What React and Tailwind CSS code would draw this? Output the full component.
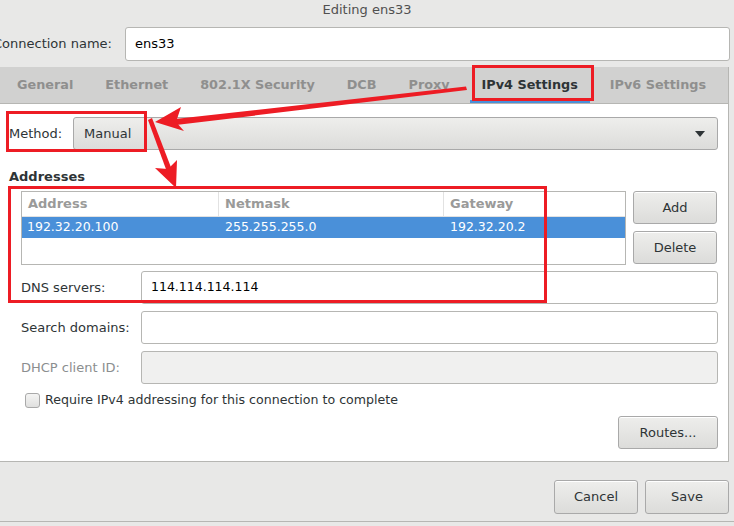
import React from 'react';

const tabs = ['General', 'Ethernet', '802.1X Security', 'DCB', 'Proxy', 'IPv4 Settings', 'IPv6 Settings'];

const Button = ({ children, className = '' }) => (
  <div
    className={`flex items-center justify-center rounded-[3px] border border-[#a9a9a9] bg-gradient-to-b from-[#eeeeec] to-[#dcdcda] text-[#2e3436] shadow-[inset_0_1px_0_#fff] ${className}`}
  >
    {children}
  </div>
);

const Field = ({ label, value, disabled }) => (
  <div className="flex items-center h-[33px]">
    <div className={`w-[120px] ${disabled ? 'text-[#8b8e8f]' : 'text-[#2e3436]'}`}>{label}</div>
    <div
      className={`flex-1 h-full rounded-[3px] border border-[#b6b6b3] flex items-center px-[9px] ${
        disabled ? 'bg-[#f0f0ef]' : 'bg-white'
      }`}
    >
      <span className="text-black text-[12.5px]">{value}</span>
    </div>
  </div>
);

const Annotations = () => (
  <svg className="absolute inset-0 pointer-events-none" width="734" height="526" viewBox="0 0 734 526">
    <g fill="none" stroke="#ed1c24" strokeWidth="3">
      <rect x="473.5" y="66.5" width="119" height="33" />
      <rect x="7.5" y="112.5" width="138" height="38" />
      <rect x="9.5" y="187.5" width="536" height="114" />
    </g>
    <g fill="#ed1c24">
      <polygon points="466,86.5 467,90 176,125 175,119" />
      <polygon points="155,122 181,107 176,122 184,131" />
      <polygon points="148,120 152,118 172,170 167,172" />
      <polygon points="176,188 155,168 168,169 177,160" />
    </g>
  </svg>
);

export default function App() {
  return (
    <div
      className="relative w-[734px] h-[526px] overflow-hidden bg-[#e8e8e7] text-[13px] text-[#2e3436]"
      style={{ fontFamily: '"DejaVu Sans", sans-serif' }}
    >
      <div className="h-[20px] text-center leading-[20px] text-[#505050]">Editing ens33</div>

      <div className="flex items-center mt-[7px] h-[34px] pr-[4px]">
        <div className="-ml-[7px] w-[132px] shrink-0 whitespace-nowrap">Connection name:</div>
        <div className="flex-1 h-full bg-white border border-[#b6b6b3] rounded-[3px] flex items-center px-[9px] text-black">
          ens33
        </div>
      </div>

      <div className="mt-[6px] mr-[5px] border-r border-[#b6b6b3]">
        <div className="h-[37px] bg-[#d1d1d0] flex items-stretch pl-[1px] border-b border-[#b6b6b3] text-[12.8px]">
          {tabs.map((t) => {
            const active = t === 'IPv4 Settings';
            return (
              <div
                key={t}
                className={`flex items-center font-bold whitespace-nowrap ${
                  active
                    ? 'text-[#2e3436] border-b-[3px] border-[#4a90d9] pt-[3px] px-[12px] mx-[4px]'
                    : 'text-[#8f8f8e] px-[16px]'
                }`}
              >
                {t}
              </div>
            );
          })}
        </div>

        <div className="bg-white h-[358px] pt-[13px] pl-[9px] pr-[10px] border-b border-[#b6b6b3]">
          <div className="flex items-center h-[33px]">
            <div className="w-[64px]">Method:</div>
            <div className="flex-1 h-full rounded-[3px] border border-[#a9a9a9] bg-gradient-to-b from-[#eeeeec] to-[#dcdcda] flex items-center pl-[10px] pr-[12px]">
              <span className="flex-1">Manual</span>
              <svg width="10" height="6" viewBox="0 0 10 6">
                <polygon points="0,0 10,0 5,6" fill="#2e3436" />
              </svg>
            </div>
          </div>

          <div className="font-bold mt-[19px] leading-[16px]">Addresses</div>

          <div className="flex mt-[6px] pl-[12px] gap-[7px]">
            <div className="w-[605px] h-[74px] border border-[#b6b6b3]">
              <div className="flex h-[25px] border-b border-[#e2e2e2] font-bold text-[#9a9a99]">
                <div className="w-[197px] border-r border-[#e2e2e2] flex items-center pl-[6px]">Address</div>
                <div className="w-[225px] border-r border-[#e2e2e2] flex items-center pl-[6px]">Netmask</div>
                <div className="flex-1 flex items-center pl-[6px]">Gateway</div>
              </div>
              <div className="flex h-[21px] bg-[#4a90d9] text-white items-center text-[12.5px]">
                <div className="w-[197px] pl-[5px]">192.32.20.100</div>
                <div className="w-[225px] pl-[6px]">255.255.255.0</div>
                <div className="flex-1 pl-[6px]">192.32.20.2</div>
              </div>
            </div>
            <div className="flex flex-col gap-[7px] w-[84px]">
              <Button className="h-[33px]">Add</Button>
              <Button className="h-[33px]">Delete</Button>
            </div>
          </div>

          <div className="pl-[12px] mt-[6px] flex flex-col gap-[7px]">
            <Field label="DNS servers:" value="114.114.114.114" />
            <Field label="Search domains:" value="" />
            <Field label="DHCP client ID:" value="" disabled />
          </div>

          <div className="flex items-center mt-[7px] pl-[16px] h-[18px]">
            <div className="w-[15px] h-[15px] rounded-[3px] border border-[#a9a9a9] bg-gradient-to-b from-[#f4f4f3] to-[#e0e0df]" />
            <span className="ml-[5px] text-[12.6px]">Require IPv4 addressing for this connection to complete</span>
          </div>

          <div className="flex justify-end mt-[7px]">
            <Button className="w-[100px] h-[33px]">Routes...</Button>
          </div>
        </div>
      </div>

      <div className="flex justify-end gap-[7px] mt-[18px] pr-[5px]">
        <Button className="w-[84px] h-[34px]">Cancel</Button>
        <Button className="w-[84px] h-[34px]">Save</Button>
      </div>
      <div className="mt-[7px] border-t border-[#b6b6b3]" />

      <Annotations />
    </div>
  );
}
